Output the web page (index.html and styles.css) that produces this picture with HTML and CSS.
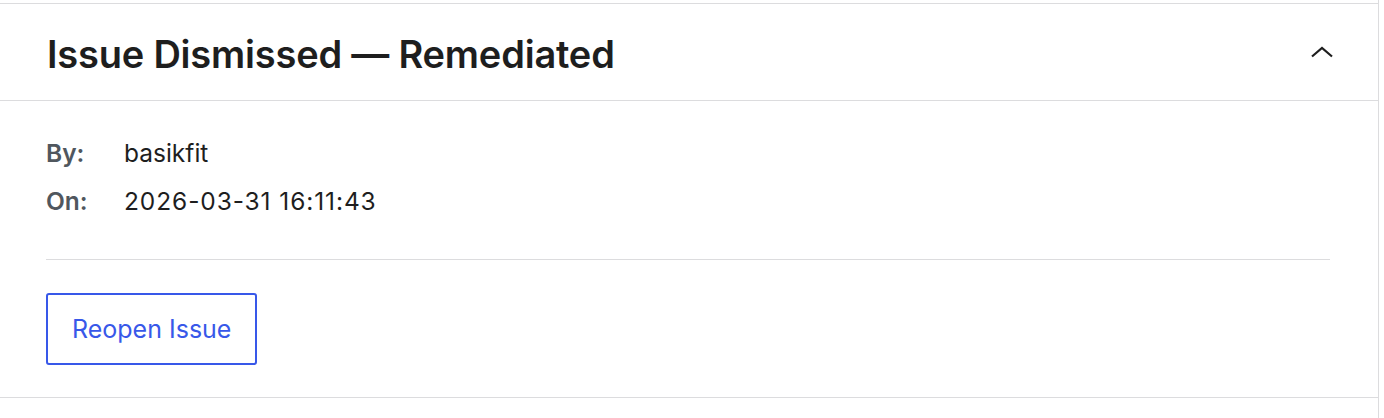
FILE: index.html
```html
<html>
<head>
	<title>Issue</title>
	<link rel="stylesheet" href="styles.css">
</head>
<body>
<div class="sidebar">
	<div class="panel">
		<div class="panelHead">
			<h2 class="panelTitle">Issue Dismissed — Remediated</h2>
			<button class="toggle" type="button" aria-expanded="true">
				<svg width="24" height="14" viewBox="0 0 24 14">
					<polyline points="2,11.5 12,3 22,11.5" fill="none" stroke="#1e1e1e" stroke-width="2.2"/>
				</svg>
			</button>
		</div>
		<div class="panelBody">
			<dl class="meta">
				<dt>By:</dt>
				<dd>basikfit</dd>
				<dt>On:</dt>
				<dd class="stamp">2026-03-31 16:11:43</dd>
			</dl>
			<hr class="divider">
			<button class="btnOutline" type="button">Reopen Issue</button>
		</div>
	</div>
</div>
</body>
</html>
```

FILE: styles.css
```css
body {
	margin: 0;
	background-color: #fff;
	font-family: Inter, "Noto Sans", sans-serif;
	color: #1e1e1e;
}
h2, dl, dd, dt { margin: 0; padding: 0; }

.sidebar {
	width: 1378px;
	height: 418px;
	border-right: 1px solid #dcdcde;
	padding-top: 3px;
	box-sizing: content-box;
}

.panel {
	border-top: 1px solid #dcdcde;
	border-bottom: 1px solid #dcdcde;
}

.panelHead {
	height: 92px;
	display: flex;
	align-items: center;
	justify-content: space-between;
	padding: 4px 44px 0 47px;
	border-bottom: 1px solid #dcdcde;
}
.panelTitle {
	font-size: 38px;
	font-weight: 600;
	letter-spacing: -0.2px;
	line-height: 44px;
}
.toggle {
	background: none;
	border: 0;
	padding: 0;
	display: flex;
	margin-top: -4px;
}

.panelBody {
	padding: 36px 48px 32px 46px;
}

.meta {
	display: grid;
	grid-template-columns: 78px auto;
	row-gap: 16px;
	font-size: 24.5px;
	line-height: 32px;
}
.meta dt {
	font-weight: 600;
	color: #50575e;
}
.meta .stamp {
	letter-spacing: 0.9px;
}

.divider {
	border: 0;
	border-top: 1px solid #dcdcde;
	margin: 42px 0 33px 0;
}

.btnOutline {
	height: 72px;
	padding: 0 24px;
	font-family: inherit;
	font-size: 25px;
	color: #3858e9;
	background: #fff;
	border: 2px solid #3858e9;
	border-radius: 3px;
}
```
